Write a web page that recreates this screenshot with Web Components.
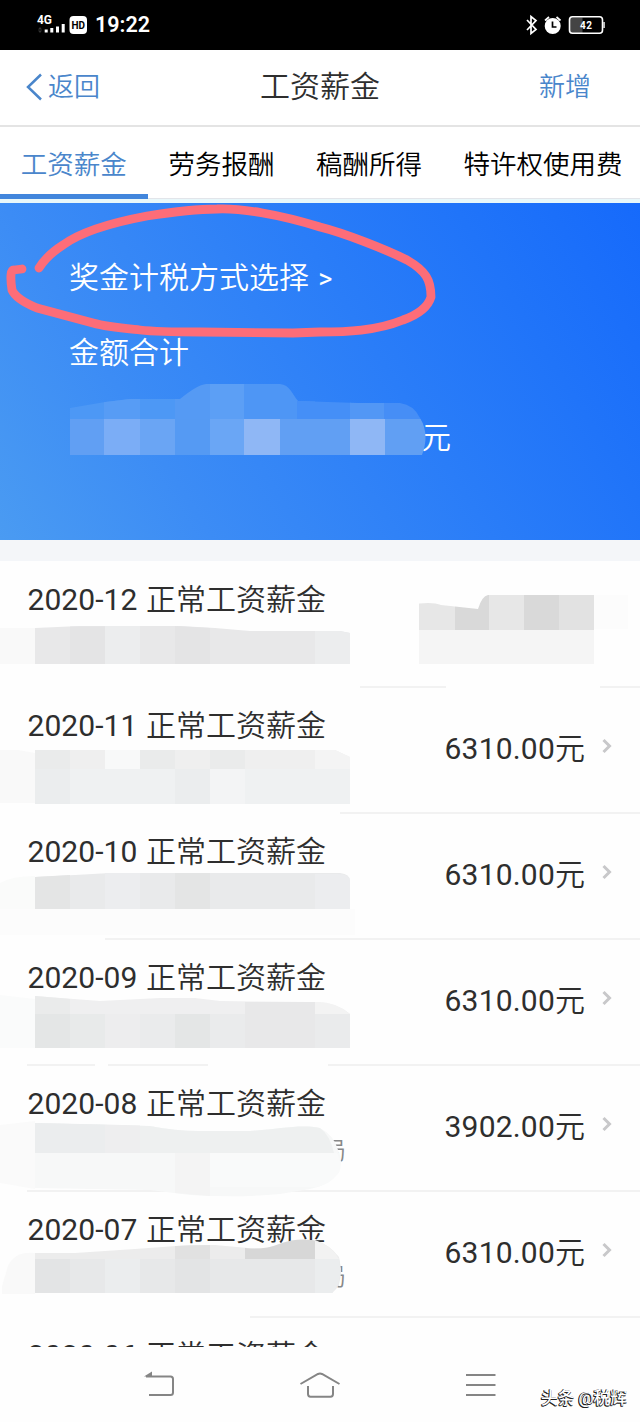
<!DOCTYPE html>
<html lang="zh-CN">
<head>
<meta charset="utf-8">
<title>工资薪金</title>
<style>
body { margin: 0; background: #fff; font-family: Roboto, "Noto Sans CJK SC", sans-serif; color: #2e2e2e; }
</style>
</head>
<body>
<tax-app></tax-app>
<script>
function define(name, html, setup) {
  const template = document.createElement('template');
  template.innerHTML = html;
  customElements.define(name, class extends HTMLElement {
    constructor() {
      super();
      this.attachShadow({ mode: 'open' }).append(template.content.cloneNode(true));
    }
    connectedCallback() { if (setup) setup(this, this.shadowRoot); }
  });
}

define('status-bar', `
<style>
:host { display: flex; height: 50px; box-sizing: border-box; background: #000; color: #fff; align-items: center; justify-content: space-between; padding: 0 35px 0 36px; }
.side { display: flex; align-items: center; }
svg { display: block; }
text { font-family: Roboto, sans-serif; font-weight: 700; fill: #fff; }
.time { font-size: 21.5px; font-weight: 600; margin-left: 7px; line-height: 50px; }
</style>
<div class="side">
  <svg width="52" height="50">
    <text x="1" y="23.500" font-size="12" textLength="15" lengthAdjust="spacingAndGlyphs">4G</text>
    <path d="M2 29.5l2-2.500 2 2.500zM2 30.500l2 2.500 2-2.500z" fill="#333"/>
    <path d="M8.700 29.500h3v3h-3zM14.300 28h3v4.500h-3zM20 26.500h3v6h-3zM25.700 24h3v8.500h-3z" fill="#fff"/>
    <rect x="33.500" y="16" width="17.500" height="18" rx="4" fill="#fff"/>
    <text x="35.500" y="29.300" font-size="11.500" textLength="13.500" lengthAdjust="spacingAndGlyphs" style="fill:#000;font-weight:700">HD</text>
  </svg>
  <span class="time">19:22</span>
</div>
<div class="side">
  <svg width="80" height="50" fill="none" stroke="#fff">
    <path d="M2 20l9 9.500-5 4V16.500l5 4L2 30" stroke-width="1.700"/>
    <circle cx="27.700" cy="26" r="8" fill="#fff" stroke="none"/>
    <path d="M20 20.500l4-3.500M31.500 17l4 3.500" stroke-width="1.700"/>
    <path d="M27.500 21.500v5.500h4" stroke="#000" stroke-width="1.700"/>
    <rect x="45" y="17.500" width="12.500" height="16" fill="#444" stroke="none"/>
    <rect x="44.500" y="16.800" width="33" height="16.500" rx="3" stroke-width="1.600"/>
    <path d="M79 22v6" stroke-width="2" stroke="#bbb"/>
    <text x="55" y="28.600" font-size="10" textLength="12" stroke="none">42</text>
  </svg>
</div>`);

define('page-header', `
<style>
:host { display: grid; grid-template-columns: 1fr auto 1fr; align-items: center; height: 77px; box-sizing: border-box; border-bottom: 2px solid #e4e4e4; padding: 0 49px 2px 25px; }
.back, .add { display: flex; align-items: center; color: #4a86cb; font-size: 26px; font-weight: 350; line-height: 1; }
.add { justify-content: flex-end; }
.title { font-size: 30px; line-height: 1; font-weight: 350; transform: translateX(12px); }
svg { margin-right: 6px; }
</style>
<div class="back"><svg width="17" height="28" fill="none" stroke="#4a86cb" stroke-width="2.500"><path d="M16 1.500L3 14l13 12.500"/></svg><slot name="back"></slot></div>
<div class="title"><slot></slot></div>
<div class="add"><slot name="action"></slot></div>`);

define('tab-item', `
<style>
:host { display: flex; align-items: center; flex: none; height: 72px; box-sizing: border-box; padding: 0 20.800px 1px; font-size: 26.500px; font-weight: 350; color: #000; }
:host([active]) { color: #4a86cb; box-shadow: inset 0 -5px #4286dc; }
</style><slot></slot>`);

define('tab-strip', `
<style>
:host { display: flex; height: 76px; box-sizing: border-box; overflow: hidden; background: linear-gradient(#fff 71px, #e2e5ea 71px, #e2e5ea 72px, #e8f7fa 72px); }
</style><slot></slot>`);

define('summary-card', `
<style>
:host { display: flex; flex-direction: column; position: relative; height: 337px; box-sizing: border-box; padding: 53px 68px 0 69px; color: #fff; font-size: 30px; line-height: 44px; font-weight: 350; background: linear-gradient(58deg, #4a9bf2 0%, #3c8cf5 25%, #2a7df8 58%, #2074f9 78%, #166afb 100%); }
.total { margin-top: 30px; }
.sum { margin: 41px 0 0 352px; }
.gt { font-size: 27px; font-weight: 400; margin-left: 2px; }
svg { position: absolute; left: 0; top: 0; }
</style>
<div class="link">奖金计税方式选择 <span class="gt">&gt;</span></div>
<div class="total">金额合计</div>
<div class="sum">元</div>
<svg width="640" height="337" viewBox="0 203 640 337">
  <clipPath id="c"><path d="M70 408L105 402 130 399H180Q197 385 206 384H280C290 385 292 394 298 401L358 403H400Q414 405 420 418 430 434 422 455H70Z"/></clipPath>
  <g clip-path="url(#c)">
    <path fill="#4d98f5" d="M70 380h105v40H70z"/><path fill="#579cf5" d="M104 380h36v40h-36z"/>
    <path fill="#559af4" d="M175 380h70v40h-70z"/><path fill="#5c9ff5" d="M210 380h34v40h-34z"/>
    <path fill="#4e96f5" d="M244 380h71v40h-71z"/><path fill="#458ff7" d="M297 380h54v40h-54z"/>
    <path fill="#5297f5" d="M350 380h35v40h-35z"/><path fill="#468ef6" d="M384 380h50v40h-50z"/>
    <path fill="#619ff3" d="M70 419h360v36H70z"/><path fill="#7badf6" d="M104 419h36v36h-36z"/>
    <path fill="#6aa5f4" d="M140 419h35v36h-35z"/><path fill="#559af3" d="M175 419h35v36h-35z"/>
    <path fill="#6aa6f5" d="M210 419h35v36h-35z"/><path fill="#8fb7f5" d="M244 419h36v36h-36zM350 419h35v36h-35z"/>
  </g>
  <path d="M39 268C44 260 52 252 63 245 82 231 115 222 147 216 172 212 195 209 217 209 240 208 278 214 320 227 344 233 385 249 407 260 426 271 431 280 431 297 428 307 417 315 403 320 376 331 346 332 320 332L293 333 200 332C177 332 157 332 140 330 120 328 107 327 93 323L37 308C25 303 15 297 12 290Q9 270 14 270L22 269" fill="none" stroke="#fd6d78" stroke-width="8.800" stroke-linecap="round" stroke-linejoin="round"/>
</svg>`);

define('income-row', `
<style>
:host { display: flex; position: relative; justify-content: space-between; height: 126px; box-sizing: border-box; padding: 17px 27px 0 27.500px; font-size: 30px; font-weight: 350; line-height: 44px; }
.title { white-space: pre; }
.month { margin-right: 1.500px; }
.num { font-weight: 390; font-family: Roboto, sans-serif; letter-spacing: .05px; }
.amount { letter-spacing: .2px; }
.right { display: flex; margin-top: 13px; height: 60px; line-height: 60px; padding-top: 2px; }
.chev { width: 12px; height: 18px; margin: 19px 0 0 16px; }
.org { position: absolute; left: 322px; top: 68px; font-size: 24px; line-height: 36px; color: #888; }
::slotted(svg) { position: absolute; left: 0; top: 0; overflow: visible; }
</style>
<div class="title"><span class="num month"></span> 正常工资薪金</div>
<div class="right"><span class="num amount"></span><span>元</span><svg class="chev" fill="none" stroke="#c8c8ca" stroke-width="3"><path d="M2.500 2l6 6-6 6"/></svg></div>
<span class="org"></span>
<slot></slot>`, (el, root) => {
  root.querySelector('.month').textContent = el.getAttribute('month');
  if (el.hasAttribute('hidden-amount')) root.querySelector('.right').remove();
  else root.querySelector('.amount').textContent = el.getAttribute('amount');
  if (el.hasAttribute('org')) root.querySelector('.org').textContent = el.getAttribute('org');
  else root.querySelector('.org').remove();
});

define('income-list', `
<style>
:host { display: block; height: 807px; box-sizing: border-box; border-top: 21px solid #f4f6f9; overflow: hidden; background: #fefefe; }
</style><slot></slot>`);

define('system-nav', `
<style>
:host { display: grid; grid-template-columns: repeat(3, 160px); justify-content: center; align-items: center; justify-items: center; position: relative; height: 75px; background: #fefefe; }
svg { fill: none; stroke: #858585; stroke-width: 2; }
.mark { position: absolute; left: 541px; top: 40px; font-size: 16.700px; line-height: 24px; font-weight: 500; color: #fff; white-space: nowrap; text-shadow: -1px 0 #222, 0 1px #222, -1px 1px #222; }
</style>
<svg width="44" height="34"><path d="M8 8.500h24.500q2.500 0 2.500 2.500v13.500q0 2.500-2.500 2.500H11"/><path d="M6 8.500l8-5v5z" fill="#858585" stroke="none"/></svg>
<svg width="44" height="34"><path d="M2.500 16L20 6q2-1 4 0l17.500 10M10 18v8q0 2.700 2.500 2.700h20Q35 28.700 35 26v-8"/></svg>
<svg width="44" height="34"><path d="M8 7h29.500M8 17h29.500M8 27h29.500"/></svg>
<div class="mark">头条 @税辉</div>`);

define('tax-app', `
<style>:host { display: flex; flex-direction: column; width: 640px; height: 1422px; overflow: hidden; }</style>
<status-bar></status-bar>
<page-header><span slot="back">返回</span>工资薪金<span slot="action">新增</span></page-header>
<tab-strip><tab-item active>工资薪金</tab-item><tab-item>劳务报酬</tab-item><tab-item>稿酬所得</tab-item><tab-item>特许权使用费</tab-item></tab-strip>
<summary-card></summary-card>
<income-list>
  <income-row month="2020-12" hidden-amount>
    <svg width="640" height="126">
      <path fill="#f9f9f9" d="M0 67h35v36H0z"/>
      <path fill="#e8e8e9" d="M35 67L80 65H180L215 67 250 70H340L350 72V103H35Z"/>
      <path fill="#e4e4e5" d="M70 65.500h35V103H70zM175 65l35 2v36h-35z"/><path fill="#ecedee" d="M105 65h35v38h-35zM315 70h25l10 2v31h-35z"/>
      <path fill="#e7e7e7" d="M419 42.500Q434 41 441 44L455 45.500V69H419z"/><path fill="#d9d9d9" d="M455 45.500l23 2.500Q482 35 488 34h1v35h-34z"/>
      <path fill="#e7e7e7" d="M489 34h36v35h-36z"/><path fill="#d9d9d9" d="M524 34h35v35h-35z"/><path fill="#e2e2e2" d="M559 34h35v35h-35z"/>
      <path fill="#f5f5f5" d="M419 69h175v34H419z"/><path fill="#f9f9f9" d="M594 34h34v34h-34z" opacity=".5"/>
      <path fill="#e6e6e6" d="M360 125.500h86v1h-86zM600 125.500h40v1h-40z"/>
    </svg>
  </income-row>
  <income-row month="2020-11" amount="6310.00">
    <svg width="640" height="126">
      <path fill="#f9f9f9" d="M0 63h18l17 3v50H0z"/>
      <path fill="#efefef" d="M35 63H335L350 70V117H35z"/><path fill="#eaebeb" d="M35 63h35v19H35zM140 63h35v19h-35zM210 63h35v19h-35z"/>
      <path fill="#f8f9f9" d="M105 63h35v20h-35z"/><path fill="#f4f4f4" d="M315 63h20l15 7v12h-35z"/>
      <path fill="#eff1f2" d="M35 82h315v35H35z"/><path fill="#ebedee" d="M35 82h35v35H35zM175 82h35v35h-35z"/><path fill="#f3f4f5" d="M210 82h35v35h-35z"/>
      <path fill="#e6e6e6" d="M340 125.500h300v1H340z"/>
    </svg>
  </income-row>
  <income-row month="2020-10" amount="6310.00">
    <svg width="640" height="126">
      <path fill="#fafbfa" d="M0 70Q12 63 35 63V96H0z"/><path fill="#fcfcfc" d="M0 96h355v26H0z"/>
      <path fill="#e9eaeb" d="M35 64L75 62 110 60H340Q350 61 350 68V96H35z"/><path fill="#e4e5e5" d="M35 64l35-2v34H35zM175 60h35v36h-35z"/><path fill="#ecedef" d="M105 60h35v36h-35zM315 61h23q12 0 12 7v28h-35z"/>
      <path fill="#e6e6e6" d="M105 125.500h535v1H105z"/>
    </svg>
  </income-row>
  <income-row month="2020-09" amount="6310.00">
    <svg width="640" height="126">
      <path fill="#fafbfb" d="M0 56L35 60V109H0z"/>
      <path fill="#efeff0" d="M35 57L100 62 160 59H195L220 62 310 63Q335 62 350 75V109H35z"/><path fill="#eaebeb" d="M35 57l35 3v15H35z"/>
      <path fill="#eaebec" d="M35 75h315v34H35z"/><path fill="#e4e6e6" d="M35 75h35v34H35zM175 75h35v34h-35z"/><path fill="#e8eaea" d="M70 75h35v34H70z"/><path fill="#ededee" d="M105 75h35v34h-35z"/><path fill="#e8e8e9" d="M245 63h70v46h-70z"/>
      <path fill="#f3f3f3" d="M315 63q20-1 35 12h-35z"/>
      <path fill="#e6e6e6" d="M27 125.500h68v1H27zM108 125.500h100v1H108zM328 125.500h312v1H328z"/>
    </svg>
  </income-row>
  <income-row month="2020-08" amount="3902.00" org="局">
    <svg width="640" height="126">
      <path fill="#e6e6e6" d="M27 125.500h613v1H27z"/>
      <path fill="#fafafa" d="M0 60l35-4v68L0 118z"/>
      <path fill="#f7f8f8" d="M35 58L150 61Q175 66 200 66H250C280 64 300 59 320 63Q334 70 338 85 344 97 338 106 330 120 310 124L280 129Q240 133 190 130L150 125 35 123z"/>
      <path fill="#eef0f0" d="M35 58L150 61Q175 66 200 66H250C280 64 300 59 320 63Q330 70 334 88H35z"/><path fill="#ebedee" d="M35 58l70 1.500V88H35z"/><path fill="#eeeeef" d="M105 59.500l35 1V88h-35z"/>
      <path fill="#f4f4f4" d="M175 88h35v43l-35-3z"/><path fill="#f9fafa" d="M210 88h127q7 15 0 22-7 9-20 12H210z"/>
    </svg>
  </income-row>
  <income-row month="2020-07" amount="6310.00" org="局">
    <svg width="640" height="126">
      <path fill="#f9f9f9" d="M35 62Q15 60 8 75L2 95 2 103H35z"/>
      <path fill="#ececec" d="M35 62L75 62 135 58 190 54 215 54 260 58Q275 56 290 50L315 49Q330 54 339 66 345 93 332 102H35z"/>
      <path fill="#e1e1e1" d="M175 55l35-1v14h-35z"/><path fill="#d7d7d7" d="M245 57q20 2 34-4 20-7 36-3v18h-70z"/><path fill="#f2f2f2" d="M315 50q17 4 24 18h-24z"/>
      <path fill="#e7e8e9" d="M35 68h304q5 22-7 34H35z"/><path fill="#e3e4e5" d="M35 68h35v34H35zM175 68h35v34h-35z"/><path fill="#ebedee" d="M105 68h35v34h-35zM315 68h24q5 22-7 34h-17z"/>
      <path fill="#e6e6e6" d="M250 125.500h390v1H250z"/>
    </svg>
  </income-row>
  <income-row month="2020-06" hidden-amount></income-row>
</income-list>
<system-nav></system-nav>`);
</script>
</body>
</html>
